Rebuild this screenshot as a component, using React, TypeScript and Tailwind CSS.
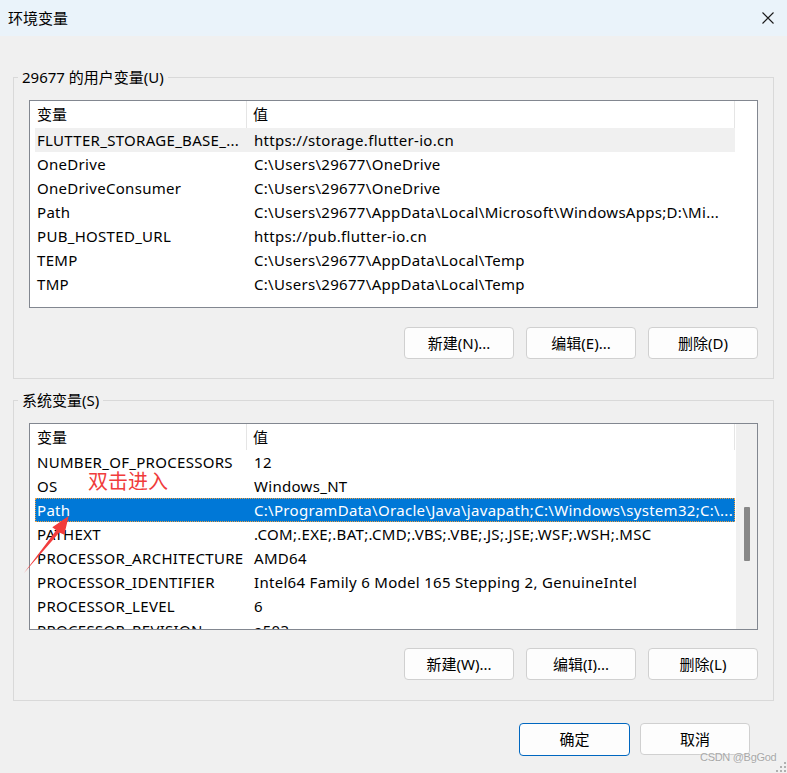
import React from "react";

type Row = { name: string; value: string; selected?: boolean; hover?: boolean };

const userRows: Row[] = [
  { name: "FLUTTER_STORAGE_BASE_...", value: "https://storage.flutter-io.cn", hover: true },
  { name: "OneDrive", value: "C:\\Users\\29677\\OneDrive" },
  { name: "OneDriveConsumer", value: "C:\\Users\\29677\\OneDrive" },
  { name: "Path", value: "C:\\Users\\29677\\AppData\\Local\\Microsoft\\WindowsApps;D:\\Mi..." },
  { name: "PUB_HOSTED_URL", value: "https://pub.flutter-io.cn" },
  { name: "TEMP", value: "C:\\Users\\29677\\AppData\\Local\\Temp" },
  { name: "TMP", value: "C:\\Users\\29677\\AppData\\Local\\Temp" },
];

const sysRows: Row[] = [
  { name: "NUMBER_OF_PROCESSORS", value: "12" },
  { name: "OS", value: "Windows_NT" },
  { name: "Path", value: "C:\\ProgramData\\Oracle\\Java\\javapath;C:\\Windows\\system32;C:\\...", selected: true },
  { name: "PATHEXT", value: ".COM;.EXE;.BAT;.CMD;.VBS;.VBE;.JS;.JSE;.WSF;.WSH;.MSC" },
  { name: "PROCESSOR_ARCHITECTURE", value: "AMD64" },
  { name: "PROCESSOR_IDENTIFIER", value: "Intel64 Family 6 Model 165 Stepping 2, GenuineIntel" },
  { name: "PROCESSOR_LEVEL", value: "6" },
  { name: "PROCESSOR_REVISION", value: "a503" },
];

function Btn({ label, primary }: { label: string; primary?: boolean }) {
  return (
    <div
      className={`flex items-center justify-center rounded-[4px] border bg-[#fdfdfd] text-[15px] tracking-normal text-black ${
        primary ? "h-[33px] w-[111px] border-[#0067c0]" : "h-[32px] w-[110px] border-[#d0d0d0]"
      }`}
    >
      {label}
    </div>
  );
}

function VarList({ rows, tall, scrollbar }: { rows: Row[]; tall?: boolean; scrollbar?: boolean }) {
  return (
    <div
      className={`flex w-[729px] overflow-hidden border border-[#828790] bg-white ${tall ? "h-[208px]" : "h-[207px]"}`}
    >
      <div className="flex w-[705px] shrink-0 flex-col pl-[5px]">
        <div className={`flex shrink-0 ${tall ? "h-[27px]" : "h-[26px]"}`}>
          <div className="flex h-full w-[212px] shrink-0 items-center border-r border-[#e5e5e5] pl-[2px]">变量</div>
          <div className="flex h-full flex-1 items-center border-r border-[#e5e5e5] pl-[6px]">值</div>
        </div>
        {rows.map((r) => (
          <div
            key={r.name + r.value}
            className={`flex h-[24px] w-[700px] shrink-0 items-center whitespace-nowrap ${
              r.selected
                ? "bg-[#0078d7] text-white outline-1 -outline-offset-1 outline-dotted outline-[#f0a040]"
                : r.hover
                ? "bg-[#f0f0f0]"
                : ""
            }`}
          >
            <div className="w-[212px] shrink-0 overflow-hidden pl-[2px] tracking-[0.3px]">{r.name}</div>
            <div className="flex-1 overflow-hidden pl-[7px] tracking-[0.3px]">{r.value}</div>
          </div>
        ))}
      </div>
      {scrollbar && (
        <div className="ml-auto flex w-[21px] shrink-0 flex-col items-center bg-[#f0f0f0] pt-[83px]">
          <div className="h-[54px] w-[6px] rounded-[1px] bg-[#878787]" />
        </div>
      )}
    </div>
  );
}

function Group({
  label,
  children,
  buttons,
  tall,
}: {
  label: string;
  children: React.ReactNode;
  buttons: string[];
  tall?: boolean;
}) {
  return (
    <div
      className={`relative ml-[13px] w-[761px] border border-[#d9d9d9] px-[15px] pt-[22px] ${
        tall ? "pb-[19px]" : "pb-[20px]"
      }`}
    >
      <div className="absolute -top-[11px] left-[4px] bg-[#f0f0f0] px-[4px] text-[15px] leading-[20px]">{label}</div>
      {children}
      <div className={`flex justify-end gap-[12px] ${tall ? "mt-[19px]" : "mt-[18px]"}`}>
        {buttons.map((b) => (
          <Btn key={b} label={b} />
        ))}
      </div>
    </div>
  );
}

export default function App() {
  return (
    <div className="relative h-[773px] w-[787px] overflow-hidden bg-[#f0f0f0] font-['Noto_Sans','Noto_Sans_CJK_SC',sans-serif] text-[15px] text-black">
      <div className="flex h-[36px] items-center justify-between bg-[#eaf3fa] pl-[8px] pr-[13px]">
        <span className="text-[15px]">环境变量</span>
        <svg width="12" height="12" viewBox="0 0 12 12">
          <path d="M0.5 0.5 L11.5 11.5 M11.5 0.5 L0.5 11.5" stroke="#1a1a1a" strokeWidth="1.1" fill="none" />
        </svg>
      </div>

      <div className="mt-[41px]">
        <Group label="29677 的用户变量(U)" buttons={["新建(N)...", "编辑(E)...", "删除(D)"]} tall>
          <VarList rows={userRows} tall />
        </Group>
      </div>

      <div className="mt-[21px]">
        <Group label="系统变量(S)" buttons={["新建(W)...", "编辑(I)...", "删除(L)"]}>
          <VarList rows={sysRows} scrollbar />
        </Group>
      </div>

      <div className="mt-[22px] flex justify-end gap-[10px] pr-[37px]">
        <Btn label="确定" primary />
        <Btn label="取消" primary={false} />
      </div>

      {/* annotation */}
      <div className="absolute left-[88px] top-[467px] font-['Noto_Sans_CJK_SC',sans-serif] text-[20px] leading-[28px] text-[#f03c3c]">
        双击进入
      </div>
      <svg className="pointer-events-none absolute left-0 top-0" width="787" height="773" viewBox="0 0 787 773">
        <polygon
          points="24,573 56.3,530.2 52.3,527.2 68.7,516 64.3,534.8 59.3,532.6"
          fill="#f23d3d"
        />
      </svg>

      <div className="absolute left-[700px] top-[749px] font-['Liberation_Sans',sans-serif] text-[11px] tracking-[-0.3px] text-[#a8a8a8] [text-shadow:0_0_2px_#ffffff]">
        CSDN @BgGod
      </div>
      <svg className="absolute bottom-0 right-0" width="12" height="12" viewBox="0 0 12 12">
        <rect x="9" y="1" width="2" height="2" fill="#b0b0b0" />
        <rect x="9" y="5" width="2" height="2" fill="#b0b0b0" />
        <rect x="5" y="5" width="2" height="2" fill="#b0b0b0" />
        <rect x="9" y="9" width="2" height="2" fill="#b0b0b0" />
        <rect x="5" y="9" width="2" height="2" fill="#b0b0b0" />
        <rect x="1" y="9" width="2" height="2" fill="#b0b0b0" />
      </svg>
    </div>
  );
}
